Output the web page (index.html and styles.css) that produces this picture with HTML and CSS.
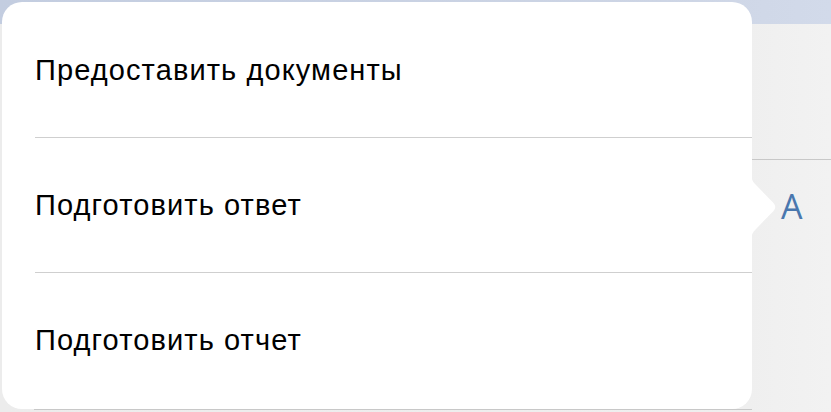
FILE: index.html
```html
<!DOCTYPE html>
<html lang="ru">
    <head>
        <meta charset="UTF-8" />
        <meta name="viewport" content="width=device-width, initial-scale=1.0" />
        <title>Действия</title>
        <link rel="stylesheet" href="styles.css">
    </head>
    <body>
        <div class="screen">
            <div class="topbar"></div>
            <div class="side">
                <div class="side-row"></div>
                <div class="side-letter">A</div>
            </div>
            <div class="under-line"></div>

            <!-- Popover menu -->
            <div class="popover">
                <ul class="menu">
                    <li class="menu-item">Предоставить документы</li>
                    <li class="menu-item">Подготовить ответ</li>
                    <li class="menu-item">Подготовить отчет</li>
                </ul>
                <svg class="arrow" width="26" height="70" viewBox="0 0 26 70">
                    <path d="M0 0 C0 7 2 10 5 13 L22.5 31 Q26 35 22.5 39 L5 57 C2 60 0 63 0 70 Z" fill="#fff" />
                </svg>
            </div>
        </div>
    </body>
</html>
```

FILE: styles.css
```css
html,
body {
    margin: 0;
    padding: 0;
}
body {
    font-family: "Liberation Sans", Arial, sans-serif;
    background-color: #eeeeee;
}
.screen {
    position: relative;
    width: 831px;
    height: 412px;
    overflow: hidden;
    background: linear-gradient(to right, #ececec, #efefef 90%, #f2f2f2);
}
.topbar {
    height: 24px;
    background: linear-gradient(to right, #c3cde0, #cdd5e5 80%, #d2daea);
}
.side {
    display: flex;
    flex-direction: column;
    margin-left: 752px;
}
.side-row {
    height: 135px;
    border-bottom: 1px solid #c8c8c8;
}
.side-letter {
    padding-top: 26px;
    padding-left: 29px;
    font-family: "Open Sans", "Liberation Sans", sans-serif;
    font-size: 34px;
    line-height: 40px;
    color: #4a77ae;
}
.under-line {
    position: absolute;
    left: 34px;
    top: 409px;
    width: 718px;
    height: 1px;
    background-color: #c8c8c8;
}
.popover {
    position: absolute;
    left: 2px;
    top: 2px;
    width: 750px;
    height: 407px;
    background-color: #fff;
    border-radius: 20px;
}
.menu {
    list-style: none;
    margin: 0;
    padding: 0 0 0 33px;
}
.menu-item {
    display: flex;
    align-items: center;
    height: 135px;
    padding-top: 1px;
    box-sizing: border-box;
    font-size: 29px;
    color: #000;
    letter-spacing: 1.1px;
}
.menu-item + .menu-item {
    border-top: 1px solid #cfcfcf;
}
.arrow {
    position: absolute;
    left: 749px;
    top: 170px;
}
```
